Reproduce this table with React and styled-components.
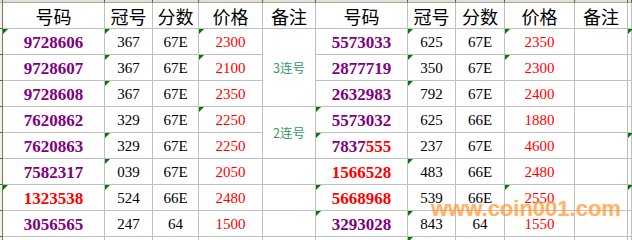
import React from "react";
import styled, { createGlobalStyle, css } from "styled-components";

const Global = createGlobalStyle`
  html, body { margin: 0; padding: 0; background: #fff; overflow: hidden; }
  #root { width: 632px; height: 240px; overflow: hidden; }
`;

const COLS = ["A", "B", "C", "D", "E", "F", "G", "H", "I", "J", "K"];

const Sheet = styled.div`
  position: relative;
  display: grid;
  grid-template-columns: 3px 102px 48px 46px 64px 53px 92px 48px 49px 70px 53px 1fr;
  grid-template-rows: 3px repeat(10, 26px);
  width: 632px;
  background: #fff;
`;

const TopCell = styled.div`
  box-sizing: border-box;
  background: #e2e0d6;
  border-right: 1px solid #5f5f52;
  border-bottom: 1px solid #a9a79c;
`;

const RowHead = styled.div`
  box-sizing: border-box;
  background: #f1efe6;
  border-right: 1px solid #7c7b5c;
  border-bottom: 1px solid #5f5e48;
`;

const tones = {
  black: "#000000",
  purple: "#800080",
  red: "#ff0000",
  green: "#339966",
};

const kinds = {
  header: css`
    font-family: "Noto Sans CJK SC", "Noto Sans", sans-serif;
    font-size: 18px;
    padding-top: 1px;
  `,
  code: css`
    font-family: "Liberation Serif", "Noto Sans CJK SC", serif;
    font-size: 17px;
    font-weight: 700;
    padding-top: 2px;
  `,
  num: css`
    font-family: "Liberation Serif", serif;
    font-size: 15px;
    padding-top: 2px;
  `,
  note: css`
    font-family: "Noto Sans CJK SC", "Liberation Sans", sans-serif;
    font-size: 12.5px;
    padding-top: 2px;
  `,
};

const Cell = styled.div`
  position: relative;
  box-sizing: border-box;
  display: flex;
  align-items: center;
  justify-content: center;
  border-right: 1px solid #c0c0c0;
  border-bottom: 1px solid #c0c0c0;
  white-space: nowrap;
  line-height: 1;
  color: ${(p) => tones[p.$tone || "black"]};
  ${(p) => kinds[p.$kind || "num"]};
  ${(p) => p.$span && css`grid-row: span ${p.$span};`}
`;

const Flag = styled.span`
  position: absolute;
  top: 0;
  left: 0;
  width: 0;
  height: 0;
  border-top: 5px solid #007a00;
  border-right: 5px solid transparent;
`;

const Red = styled.span`
  color: #ff0000;
`;

const Watermark = styled.div`
  position: absolute;
  left: 431px;
  top: 198px;
  font-family: "Liberation Sans", Arial, sans-serif;
  font-weight: 700;
  font-size: 22px;
  line-height: 1;
  color: rgba(255, 150, 50, 0.55);
  text-shadow: 0 0 1px rgba(255, 150, 50, 0.45);
  pointer-events: none;
  white-space: nowrap;
`;

const headers = ["号码", "冠号", "分数", "价格", "备注", "号码", "冠号", "分数", "价格", "备注", ""];

const left = [
  ["9728606", "367", "67E", "2300"],
  ["9728607", "367", "67E", "2100"],
  ["9728608", "367", "67E", "2350"],
  ["7620862", "329", "67E", "2250"],
  ["7620863", "329", "67E", "2250"],
  ["7582317", "039", "67E", "2050"],
  ["1323538", "524", "66E", "2480", "red"],
  ["3056565", "247", "64", "1500"],
];

const right = [
  ["5573033", "625", "67E", "2350"],
  ["2877719", "350", "67E", "2300"],
  ["2632983", "792", "67E", "2400"],
  ["5573032", "625", "66E", "1880"],
  ["7837555", "237", "67E", "4600", "split"],
  ["1566528", "483", "66E", "2480", "red"],
  ["5668968", "539", "66E", "2550", "red"],
  ["3293028", "843", "64", "1550"],
];

const flags = [
  ["A", "B", "D", "G", "I", "K"],
  ["B", "D", "G", "I"],
  ["B", "G"],
  ["D", "F"],
  ["B", "F", "K"],
  ["B", "G"],
  ["A", "B", "F", "I", "K"],
  ["F", "G"],
  ["G"],
];

const notes = { 0: { text: "3连号", span: 3 }, 3: { text: "2连号", span: 2 }, 5: {}, 6: {}, 7: {} };

function CodeText({ value, mode }) {
  if (mode === "split") {
    return (
      <>
        {value.slice(0, 4)}
        <Red>{value.slice(4)}</Red>
      </>
    );
  }
  return value;
}

export default function App() {
  const rows = [];
  left.forEach((l, i) => {
    const r = right[i];
    const f = flags[i];
    const has = (c) => f.includes(c);
    const note = notes[i];
    rows.push(
      <React.Fragment key={i}>
        <RowHead />
        <Cell $kind="code" $tone={l[4] === "red" ? "red" : "purple"}>
          {has("A") && <Flag />}
          {l[0]}
        </Cell>
        <Cell>{has("B") && <Flag />}{l[1]}</Cell>
        <Cell>{has("C") && <Flag />}{l[2]}</Cell>
        <Cell $tone="red">{has("D") && <Flag />}{l[3]}</Cell>
        {note && (
          <Cell $kind="note" $tone="green" $span={note.span}>
            {has("E") && <Flag />}
            {note.text}
          </Cell>
        )}
        <Cell $kind="code" $tone={r[4] === "red" ? "red" : "purple"}>
          {has("F") && <Flag />}
          <CodeText value={r[0]} mode={r[4]} />
        </Cell>
        <Cell>{has("G") && <Flag />}{r[1]}</Cell>
        <Cell>{has("H") && <Flag />}{r[2]}</Cell>
        <Cell $tone="red">{has("I") && <Flag />}{r[3]}</Cell>
        <Cell>{has("J") && <Flag />}</Cell>
        <Cell>{has("K") && <Flag />}</Cell>
      </React.Fragment>
    );
  });

  return (
    <>
      <Global />
      <Sheet>
        <TopCell />
        {COLS.map((c) => (
          <TopCell key={c} />
        ))}
        <RowHead />
        {headers.map((h, i) => (
          <Cell key={i} $kind="header">{h}</Cell>
        ))}
        {rows}
        <RowHead />
        {COLS.map((c) => (
          <Cell key={c}>{flags[8].includes(c) && <Flag />}</Cell>
        ))}
        <Watermark>www.coin001.com</Watermark>
      </Sheet>
    </>
  );
}
